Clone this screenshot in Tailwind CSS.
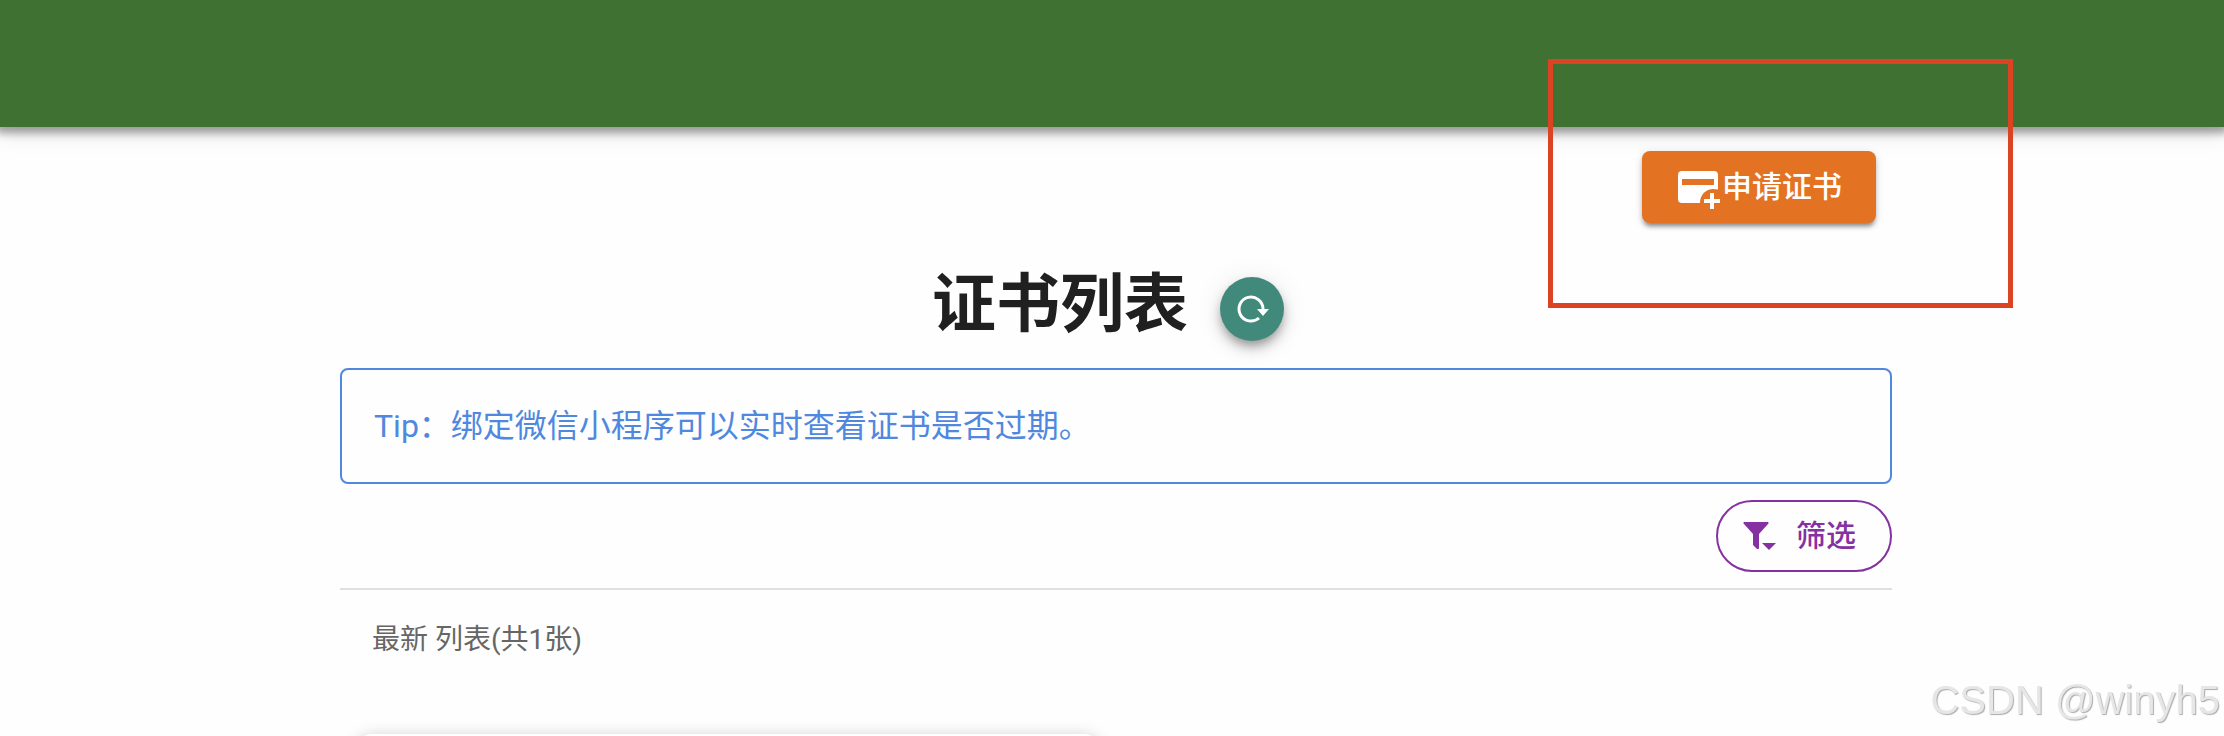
<!DOCTYPE html>
<html lang="zh-CN">
<head>
    <meta charset="UTF-8" />
    <meta name="viewport" content="width=device-width, initial-scale=1.0" />
    <title>证书列表</title>
    <script src="https://cdn.jsdelivr.net/npm/@tailwindcss/browser@4"></script>
</head>
<body class="min-h-screen overflow-hidden bg-[#fefefe] font-[Roboto,'Noto_Sans_CJK_SC',sans-serif]">
    <header class="h-[127px] bg-[#3f7232] shadow-[0_2px_8px_4px_rgba(0,0,0,0.35),0_8px_20px_rgba(0,0,0,0.1)]"></header>

    <main class="pl-2">
        <div class="mx-auto max-w-[1552px]">
            <!-- apply -->
            <div class="flex justify-end px-4 pt-6">
                <div class="relative">
                    <button type="button" class="flex h-[72px] items-center rounded-lg bg-[#e37322] pr-[34px] pl-8 text-[30px] leading-[48px] font-medium text-white shadow-[0_6px_4px_-4px_rgba(0,0,0,0.3),0_4px_4px_rgba(0,0,0,0.2),0_2px_10px_rgba(0,0,0,0.12)]">
                        <svg class="size-12" viewBox="0 0 48 48" fill="currentColor" aria-hidden="true">
                            <path fill-rule="evenodd" d="M8 8h32a4 4 0 0 1 4 4v14.500C33 24 26 31 26 40H8a4 4 0 0 1-4-4V12a4 4 0 0 1 4-4Zm0 8v6h32v-6Z" />
                            <path d="M36 30h4v6h6v4h-6v6h-4v-6h-6v-4h6Z" />
                        </svg>
                        <span>申请证书</span>
                    </button>
                    <div class="pointer-events-none absolute -top-[92px] -right-[137px] -bottom-[85px] -left-[94px] border-5 border-[#dc4322]"></div>
                </div>
            </div>

            <!-- title -->
            <div class="mt-[34px] flex items-end justify-center gap-8 pr-4">
                <h1 class="text-[64px] leading-[96px] font-bold text-[#202020]">证书列表</h1>
                <button type="button" aria-label="刷新" class="mb-3 flex size-16 items-center justify-center rounded-full bg-[#418a7b] text-white shadow-[0_6px_10px_-2px_rgba(0,0,0,0.3),0_8px_16px_rgba(0,0,0,0.14),0_2px_30px_rgba(0,0,0,0.08)]">
                    <svg class="size-9" viewBox="0 0 36 36" aria-hidden="true">
                        <path d="M25 27A12 12 0 1 1 29 18v3" fill="none" stroke="currentColor" stroke-width="3" />
                        <path d="M23 18h12l-6 7Z" fill="currentColor" />
                    </svg>
                </button>
            </div>

            <!-- tip -->
            <div class="mt-[15px] rounded-lg border-2 border-[#4f88de] px-8 py-8 text-[32px] leading-[48px] text-[#4f88de]">Tip：绑定微信小程序可以实时查看证书是否过期。</div>

            <div class="mt-4 flex justify-end border-b-2 border-[#e0e0e0] pb-4">
                <button type="button" class="flex h-[72px] items-center gap-[14px] rounded-full border-2 border-[#8531a2] pr-[34px] pl-6 text-[30px] leading-[48px] font-medium text-[#8531a2]">
                    <svg class="h-9 w-10" viewBox="0 0 40 36" fill="currentColor" aria-hidden="true">
                        <path d="M3 4h22a1 1 0 0 1 1 2l-9 10v14a1 1 0 0 1-1 1h-1l-4-4V16L2 6a1 1 0 0 1 1-2Z" />
                        <path d="M20 25h14l-7 7Z" />
                    </svg>
                    <span>筛选</span>
                </button>
            </div>

            <p class="px-8 text-[28px] leading-[100px] text-[#666666]">最新 列表(共1张)</p>

            <div class="mt-11 grid grid-cols-2">
                <article class="mx-4 h-40 rounded-2xl bg-white shadow-[0_2px_16px_rgba(0,0,0,0.2)]"></article>
            </div>
        </div>
    </main>

    <div class="fixed right-1 bottom-3 font-[Liberation_Sans,Arial,sans-serif] text-[40px] leading-12 text-[#e6e6e6] [text-shadow:1px_1px_1px_#aaaaaa]">CSDN @winyh5</div>
</body>
</html>
